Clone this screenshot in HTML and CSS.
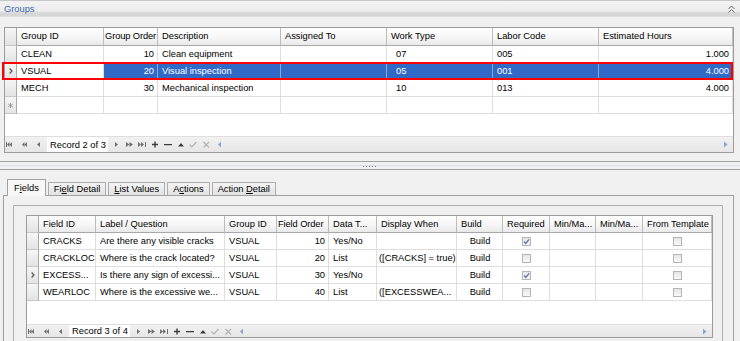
FILE: index.html
```html
<!DOCTYPE html>
<html>
  <head>
    <meta charset="utf-8">
    <title>Groups</title>
    <link rel="stylesheet" href="styles.css">
  </head>
  <body>
    <div class="pane-title">
      <span class="pane-name">Groups</span>
      <svg class="collapse" width="7" height="8" viewBox="0 0 7 8"><path d="M0.5 4L3.5 1L6.5 4M0.5 7.5L3.5 4.5L6.5 7.5"/></svg>
    </div>

    <div class="groups-pane">
      <div class="grid groups-grid">
        <div class="row head">
          <div class="ind"></div>
          <div>Group ID</div>
          <div class="snug">Group Order</div>
          <div>Description</div>
          <div>Assigned To</div>
          <div>Work Type</div>
          <div>Labor Code</div>
          <div>Estimated Hours</div>
        </div>
        <div class="row">
          <div class="ind"></div>
          <div>CLEAN</div>
          <div class="num">10</div>
          <div>Clean equipment</div>
          <div></div>
          <div class="wt">07</div>
          <div>005</div>
          <div class="num">1.000</div>
        </div>
        <div class="row selected">
          <div class="ind"><svg width="4" height="6" viewBox="0 0 4 6"><path d="M0.6 0.5L3 3L0.6 5.5"/></svg></div>
          <div class="focus">VSUAL</div>
          <div class="num">20</div>
          <div>Visual inspection</div>
          <div></div>
          <div class="wt">05</div>
          <div>001</div>
          <div class="num">4.000</div>
        </div>
        <div class="row">
          <div class="ind"></div>
          <div>MECH</div>
          <div class="num">30</div>
          <div>Mechanical inspection</div>
          <div></div>
          <div class="wt">10</div>
          <div>013</div>
          <div class="num">4.000</div>
        </div>
        <div class="row">
          <div class="ind"><svg class="star" width="5" height="5" viewBox="0 0 5 5"><path d="M2.5 0v5M0.3 1.2l4.4 2.6M0.3 3.8l4.4-2.6"/></svg></div>
          <div></div><div></div><div></div><div></div><div></div><div></div><div></div>
        </div>
        <div class="fill"></div>
        <div class="nav">
          <svg width="42" height="9" viewBox="0 0 42 9"><path class="arrow" d="M1 2h1v5H1z M4.5 2v5L2 4.5z M7 2v5L4.5 4.5z M19.5 2v5L17 4.5z M22 2v5L19.5 4.5z M35 2v5L32 4.5z"/></svg>
          <span class="record">Record 2 of 3</span>
          <svg width="115" height="9" viewBox="0 0 115 9">
            <path class="arrow" d="M7 2v5l3-2.5z M18 2v5l3.5-2.5z M21.5 2v5L25 4.5z M30 2v5l3-2.5z M33 2v5l3-2.5z M37 2h1v5h-1z"/>
            <path class="dark" d="M44 3.8h6v1.4h-6z M46.3 1.5h1.4v6h-1.4z M56 3.9h8v1.3h-8z M70 6.5h6L73 3z"/>
            <path class="faint" d="M81.5 4.5l2.3 2.3L88.5 2 M95.5 2l5.5 5.5 M101 2l-5.5 5.5"/>
            <path class="blue" d="M113 1.5v6L110 4.5z"/>
          </svg>
          <svg class="end" width="4" height="9" viewBox="0 0 4 9"><path class="blue" d="M0 1.5v6L3.5 4.5z"/></svg>
        </div>
        <div class="mark"></div>
      </div>
    </div>

    <div class="splitter"><span class="grip"></span></div>

    <div class="details-pane">
      <div class="tabs">
        <div class="tab active">F<u>i</u>elds</div>
        <div class="tab">Fi<u>e</u>ld Detail</div>
        <div class="tab"><u>L</u>ist Values</div>
        <div class="tab">A<u>c</u>tions</div>
        <div class="tab">Action <u>D</u>etail</div>
      </div>
      <div class="tab-page">
        <div class="group-box">
          <div class="grid fields-grid">
            <div class="row head">
              <div class="ind"></div>
              <div>Field ID</div>
              <div>Label / Question</div>
              <div>Group ID</div>
              <div class="snug">Field Order</div>
              <div>Data T...</div>
              <div>Display When</div>
              <div>Build</div>
              <div>Required</div>
              <div>Min/Ma...</div>
              <div>Min/Ma...</div>
              <div>From Template</div>
            </div>
            <div class="row">
              <div class="ind"></div>
              <div>CRACKS</div>
              <div>Are there any visible cracks</div>
              <div>VSUAL</div>
              <div class="num">10</div>
              <div>Yes/No</div>
              <div class="tight"></div>
              <div class="cen">Build</div>
              <div class="cen"><span class="check"><svg width="7" height="7" viewBox="0 0 7 7"><path d="M1 3.5l1.8 2L6 1.3"/></svg></span></div>
              <div></div>
              <div></div>
              <div class="cen"><span class="check"></span></div>
            </div>
            <div class="row">
              <div class="ind"></div>
              <div>CRACKLOC</div>
              <div>Where is the crack located?</div>
              <div>VSUAL</div>
              <div class="num">20</div>
              <div>List</div>
              <div class="tight">([CRACKS] = true)</div>
              <div class="cen">Build</div>
              <div class="cen"><span class="check"></span></div>
              <div></div>
              <div></div>
              <div class="cen"><span class="check"></span></div>
            </div>
            <div class="row">
              <div class="ind"><svg width="4" height="6" viewBox="0 0 4 6"><path d="M0.6 0.5L3 3L0.6 5.5"/></svg></div>
              <div>EXCESS...</div>
              <div>Is there any sign of excessi...</div>
              <div>VSUAL</div>
              <div class="num">30</div>
              <div>Yes/No</div>
              <div class="tight"></div>
              <div class="cen">Build</div>
              <div class="cen"><span class="check"><svg width="7" height="7" viewBox="0 0 7 7"><path d="M1 3.5l1.8 2L6 1.3"/></svg></span></div>
              <div></div>
              <div></div>
              <div class="cen"><span class="check"></span></div>
            </div>
            <div class="row">
              <div class="ind"></div>
              <div>WEARLOC</div>
              <div>Where is the excessive we...</div>
              <div>VSUAL</div>
              <div class="num">40</div>
              <div>List</div>
              <div class="tight">([EXCESSWEA...</div>
              <div class="cen">Build</div>
              <div class="cen"><span class="check"></span></div>
              <div></div>
              <div></div>
              <div class="cen"><span class="check"></span></div>
            </div>
            <div class="fill"></div>
            <div class="nav">
              <svg width="42" height="9" viewBox="0 0 42 9"><path class="arrow" d="M1 2h1v5H1z M4.5 2v5L2 4.5z M7 2v5L4.5 4.5z M19.5 2v5L17 4.5z M22 2v5L19.5 4.5z M35 2v5L32 4.5z"/></svg>
              <span class="record">Record 3 of 4</span>
              <svg width="115" height="9" viewBox="0 0 115 9">
                <path class="arrow" d="M7 2v5l3-2.5z M18 2v5l3.5-2.5z M21.5 2v5L25 4.5z M30 2v5l3-2.5z M33 2v5l3-2.5z M37 2h1v5h-1z"/>
                <path class="dark" d="M44 3.8h6v1.4h-6z M46.3 1.5h1.4v6h-1.4z M56 3.9h8v1.3h-8z M70 6.5h6L73 3z"/>
                <path class="faint" d="M81.5 4.5l2.3 2.3L88.5 2 M95.5 2l5.5 5.5 M101 2l-5.5 5.5"/>
                <path class="blue" d="M113 1.5v6L110 4.5z"/>
              </svg>
              <svg class="end" width="4" height="9" viewBox="0 0 4 9"><path class="blue" d="M0 1.5v6L3.5 4.5z"/></svg>
            </div>
          </div>
        </div>
      </div>
    </div>
  </body>
</html>
```

FILE: styles.css
```css
body {
  margin: 0;
  height: 341px;
  overflow: hidden;
  background-color: #f0f0f0;
  font-family: "Liberation Sans", Arial, sans-serif;
  font-size: 9.3px;
  color: #000;
}

/* title bar of the upper pane */
.pane-title {
  height: 16px;
  border-top: 1px solid #c6c6c6;
  background: linear-gradient(#f2f2f2 0, #ececec 10px, #d6d6d6 12px, #d6d6d6 15px, #e6e6e6 16px);
  display: flex;
  align-items: center;
  justify-content: space-between;
  padding: 0 5px 0 4px;
}

.pane-name {
  color: #3d67ab;
}

.collapse path {
  fill: none;
  stroke: #6a6a6a;
  stroke-width: 1;
}

.groups-pane {
  padding: 10px 6px 0 4px;
}

/* data grids */
.grid {
  position: relative;
  display: flex;
  flex-direction: column;
  border: 1px solid #9c9c9c;
  background-color: #fff;
}

.groups-grid {
  height: 124px;
}

.fields-grid {
  height: 121px;
}

.row {
  display: grid;
  height: 17px;
  flex: none;
}

.groups-grid .row {
  grid-template-columns: 12px 87px 54px 123px 106px 106px 106px 1fr;
}

.fields-grid .row {
  grid-template-columns: 12px 57px 129px 52px 52px 48px 80px 46px 47px 46px 47px 1fr;
}

.groups-grid .head {
  height: 18px;
}

.row > div {
  box-sizing: border-box;
  min-width: 0;
  padding: 0 3px 0 4px;
  line-height: 16px;
  white-space: nowrap;
  overflow: hidden;
  border-right: 1px solid #dedede;
  border-bottom: 1px solid #dedede;
}

.head > div {
  padding: 0 1px 0 4px;
  background: linear-gradient(#ffffff, #f5f5f5 60%, #e9e9e9);
  border-right-color: #bcbcbc;
  border-bottom-color: #a8a8a8;
}

.head > .snug {
  padding: 0 0 0 1px;
  letter-spacing: -0.1px;
}

.groups-grid .head > div {
  line-height: 17px;
}

.row > .ind {
  padding: 0;
  display: flex;
  align-items: center;
  justify-content: center;
  background: linear-gradient(#f6f6f6, #e3e3e3);
  border-right-color: #a9a9a9;
  border-bottom-color: #c6c6c6;
}

.ind path {
  fill: none;
  stroke: #555;
  stroke-width: 1.2;
}

.ind .star path {
  stroke: #9a9a9a;
  stroke-width: 0.9;
}

.num {
  text-align: right;
}

.wt {
  text-indent: 5px;
}

.row > .tight {
  padding: 0 1px 0 2px;
}

.cen {
  display: flex;
  align-items: center;
  justify-content: center;
}

.row.selected > div {
  background-color: #3169c6;
  color: #fff;
  border-right-color: #8aa8dc;
}

.row.selected > .focus {
  background-color: #fff;
  color: #000;
  border-right-color: #dedede;
}

.row.selected > .ind {
  background: linear-gradient(#f6f6f6, #e3e3e3);
  border-right-color: #a9a9a9;
}

.check {
  box-sizing: border-box;
  width: 9px;
  height: 9px;
  border: 1px solid #b4b4b4;
  background: linear-gradient(#e6e6e6, #f8f8f8);
  display: flex;
  align-items: center;
  justify-content: center;
}

.check path {
  fill: none;
  stroke: #5a72a8;
  stroke-width: 1.3;
}

.fill {
  flex: 1;
}

/* record navigator */
.nav {
  box-sizing: border-box;
  height: 16px;
  flex: none;
  display: flex;
  align-items: center;
  background: linear-gradient(#f1f1f1, #e6e6e6);
  border-top: 1px solid #dedede;
}

.fields-grid .nav {
  height: 13px;
}

.record {
  box-sizing: border-box;
  width: 61px;
  padding-left: 3px;
  align-self: stretch;
  display: flex;
  align-items: center;
  background-color: #fff;
}

.nav .arrow {
  fill: #707070;
}

.nav .dark {
  fill: #3c3c3c;
}

.nav .faint {
  fill: none;
  stroke: #b3b3b3;
  stroke-width: 1.2;
}

.nav .blue {
  fill: #88a3d3;
}

.nav .end {
  margin-left: auto;
  margin-right: 5px;
}

/* red highlight drawn over the current group */
.mark {
  position: absolute;
  top: 34px;
  left: -3px;
  right: 0;
  height: 18px;
  box-sizing: border-box;
  border: 2px solid #ff0000;
  pointer-events: none;
}

.splitter {
  margin-top: 8px;
  height: 7px;
  border-top: 1px solid #a0a0a0;
  border-bottom: 1px solid #a0a0a0;
  background: linear-gradient(#f0f0f0 0, #f0f0f0 3px, #dadee6 3px, #dadee6 4px, #f0f0f0 4px);
  display: flex;
  align-items: center;
  justify-content: center;
}

.grip {
  width: 15px;
  height: 1px;
  margin-top: 1px;
  background: repeating-linear-gradient(to right, #7c7c7c 0, #7c7c7c 1px, transparent 1px, transparent 3px);
}

/* lower pane with tabs */
.details-pane {
  padding: 9px 6px 0 3px;
}

.tabs {
  display: flex;
  align-items: flex-end;
  height: 16px;
  padding-left: 4px;
}

.tab {
  height: 12px;
  line-height: 12px;
  padding: 0 5px;
  margin-left: 2px;
  border: 1px solid #acacac;
  border-bottom: none;
  background: linear-gradient(#f4f4f4, #e2e2e2);
}

.tab.active {
  position: relative;
  z-index: 1;
  height: 16px;
  line-height: 16px;
  padding: 0 6px;
  margin-left: 0;
  margin-bottom: -1px;
  border-color: #a0a0a0;
  background: #f7f7f7;
}

.tab-page {
  border: 1px solid #a0a0a0;
  padding: 9px 10px 0 9px;
}

.group-box {
  border: 1px solid #b0b0b0;
  padding: 9px 9px 4px 12px;
}
```
